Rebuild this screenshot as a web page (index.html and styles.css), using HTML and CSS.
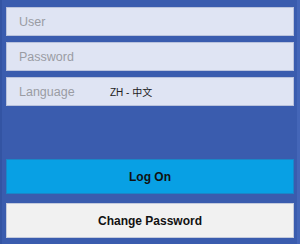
FILE: index.html
```html
<!DOCTYPE html>
<html lang="en">
<head>
  <meta charset="UTF-8">
  <title>Log On</title>
  <link rel="stylesheet" href="styles.css">
</head>
<body>
  <div class="panel">
    <div class="field"><span class="label">User</span></div>
    <div class="field"><span class="label">Password</span></div>
    <div class="field">
      <span class="label">Language</span>
      <span class="value">ZH - 中文</span>
    </div>
    <div class="spacer"></div>
    <button class="btn primary">Log On</button>
    <button class="btn secondary">Change Password</button>
  </div>
</body>
</html>
```

FILE: styles.css
```css
html, body {
  margin: 0;
  padding: 0;
}
body {
  width: 300px;
  height: 244px;
  overflow: hidden;
  font-family: "Liberation Sans", Arial, sans-serif;
}
.panel {
  box-sizing: border-box;
  width: 300px;
  height: 244px;
  background: #3a5cae;
  border-left: 2px solid #3354a3;
  border-right: 3px solid #4466b8;
  padding: 7px 3px 6px 4px;
  display: flex;
  flex-direction: column;
  gap: 6px;
}
.field {
  box-sizing: border-box;
  height: 29px;
  background: #dfe4f3;
  border: 1px solid #b9c2dc;
  display: flex;
  align-items: center;
  padding-left: 12px;
}
.label {
  color: #9a9ca3;
  font-size: 12.5px;
  width: 91px;
}
.value {
  color: #222;
  font-size: 10px;
  font-family: "Liberation Sans", "Noto Sans CJK SC", sans-serif;
}
.spacer {
  flex: 1;
}
.btn {
  box-sizing: border-box;
  height: 35px;
  margin: 0;
  font-family: "Liberation Sans", Arial, sans-serif;
  font-weight: bold;
  font-size: 12px;
  color: #111;
  padding: 0;
}
.primary {
  background: #08a0e4;
  border: 1px solid #1a86c8;
}
.secondary {
  background: #f1f1f1;
  border: 1px solid #c3cadc;
  margin-top: 3px;
}
```
